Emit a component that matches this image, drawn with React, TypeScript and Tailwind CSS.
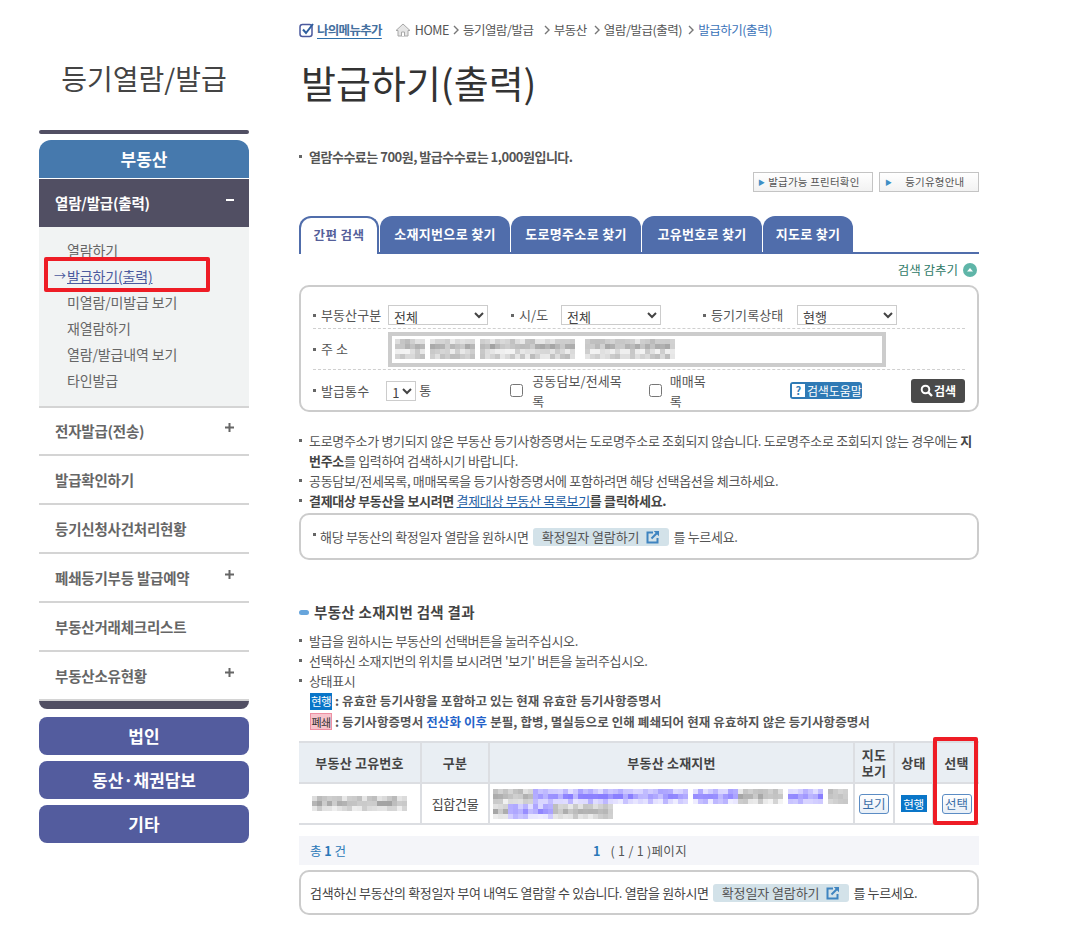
import React from "react";

const FONT = "[font-family:'Noto_Sans_CJK_KR','Noto_Sans',sans-serif]";

function hash(a: number, b: number, s: number) {
  const v = Math.sin(a * 12.9898 + b * 78.233 + s * 37.719) * 43758.5453;
  return v - Math.floor(v);
}

type Range = [number, number, "g" | "p"];

function Mosaic({ w, rows, cell, seed, line }: { w: number; rows: number; cell: number; seed: number; line: (r: number) => Range[] }) {
  const rects: React.ReactNode[] = [];
  for (let r = 0; r < rows; r++) {
    const ranges = line(r);
    for (let c = 0; c < Math.floor(w / cell); c++) {
      const x = c * cell;
      const hit = ranges.find((g) => x >= g[0] && x < g[1]);
      if (!hit) continue;
      const h = hash(c, r, seed);
      const mid = r % 3 === 1 ? 0.34 : r % 3 === 0 ? 0.16 : 0.08;
      const a = Math.min(0.9, mid + h * 0.36);
      const fill = hit[2] === "p" ? `rgba(86,70,255,${a})` : `rgba(90,90,90,${a * 0.8})`;
      rects.push(<rect key={`${r}-${c}`} x={x} y={r * cell} width={cell} height={cell} fill={fill} />);
    }
  }
  return (
    <svg width={w} height={rows * cell} className="block">
      {rects}
    </svg>
  );
}

function Bullet({ children, bold, className = "" }: { children: React.ReactNode; bold?: boolean; className?: string }) {
  return (
    <li className={`flex items-start ${bold ? "font-bold text-[#444]" : ""} ${className}`}>
      <span className="mt-[8px] mr-[7px] w-[3px] h-[3px] bg-[#666] shrink-0" />
      <span>{children}</span>
    </li>
  );
}

function ExternalIcon() {
  return (
    <svg width="14" height="14" viewBox="0 0 14 14" className="shrink-0" fill="none" stroke="#3f84c0" strokeWidth="2">
      <path d="M7 2.5H1.5v10h10V8" />
      <path d="M5.5 8.5 12 2" />
      <path d="M8 1h5v5" fill="#3f84c0" stroke="none" />
      <path d="M8 1h5v5z" fill="#3f84c0" stroke="none" />
    </svg>
  );
}

function ViewButton() {
  return (
    <span className="inline-flex items-center gap-[7px] h-[18px] px-[9px] rounded-[3px] bg-[#d3e2e9] text-[#555] tracking-[-0.1px] mx-[2px]">
      확정일자 열람하기 <ExternalIcon />
    </span>
  );
}

function Chevron() {
  return (
    <svg width="6" height="10" viewBox="0 0 6 10" className="mx-[4px] shrink-0" fill="none" stroke="#777" strokeWidth="1.4">
      <path d="M1 1l4 4-4 4" />
    </svg>
  );
}

function SideItem({ label, plus }: { label: string; plus?: boolean }) {
  return (
    <div className="h-[49px] border-b-2 border-[#d4d4d4] flex items-center justify-between pl-[16px] pr-[15px] text-[14.5px] font-bold text-[#666] tracking-[-0.2px]">
      <span className="pt-[1px]">{label}</span>
      {plus && (
        <svg width="9" height="9" viewBox="0 0 9 9" className="mb-[6px]">
          <path d="M3.5 0h2v3.5H9v2H5.5V9h-2V5.5H0v-2h3.5z" fill="#666" />
        </svg>
      )}
    </div>
  );
}

function OtherMenu({ label }: { label: string }) {
  return <div className="h-[38px] rounded-[8px] bg-[#535c9e] text-white text-[17px] font-bold flex items-center justify-center">{label}</div>;
}

function Tab({ label, w, active }: { label: string; w: string; active?: boolean }) {
  return (
    <div
      className={
        active
          ? `${w} h-[38px] -mb-[2px] relative z-10 bg-white border-2 border-b-0 border-[#506dab] rounded-t-[12px] flex items-center justify-center text-[12.5px] font-bold text-[#555f9a] tracking-[0.4px] pb-[3px]`
          : `${w} h-[36px] bg-[#506dab] rounded-t-[12px] flex items-center justify-center text-[13px] font-bold text-white tracking-[0.3px]`
      }
    >
      {label}
    </div>
  );
}

function Field({ label, className = "" }: { label: string; className?: string }) {
  return (
    <span className={`flex items-center text-[13px] text-[#555] tracking-[0.1px] ${className}`}>
      <span className="w-[3px] h-[3px] bg-[#666] mr-[5px]" />
      {label}
    </span>
  );
}

function Sel({ w, value, options }: { w: string; value: string; options?: string[] }) {
  return (
    <select defaultValue={value} className={`${w} h-[20px] border border-[#ccc] text-[13px] text-[#444] pl-[1px] bg-white`}>
      {(options || [value]).map((o) => (
        <option key={o}>{o}</option>
      ))}
    </select>
  );
}

const Dash = () => <div className="border-t border-dashed border-[#d0d0d0]" />;

export default function App() {
  return (
    <div className={`w-[1072px] h-[946px] bg-white flex overflow-hidden ${FONT} text-[#555] text-[13px] leading-[20px]`}>
      {/* Sidebar */}
      <aside className="w-[210px] ml-[39px] shrink-0 relative">
        <div className="h-[130px] flex items-center justify-center pt-[26px] text-[28px] leading-[40px] text-[#444]">등기열람/발급</div>
        <div className="h-[4px] rounded-[2px] bg-[#514f63]" />
        <div className="mt-[6px] h-[38px] rounded-t-[12px] bg-[#4679ad] text-white text-[17px] font-bold flex items-center justify-center">부동산</div>
        <div className="mt-[1px] h-[48px] bg-[#514f63] text-white text-[14.5px] font-bold flex items-center justify-between pl-[16px] pr-[15px] tracking-[-0.2px]">
          <span>열람/발급(출력)</span>
          <span className="w-[8px] h-[2px] bg-white mb-[6px]" />
        </div>
        <div className="h-[180px] bg-[#f1f3f3] pt-[10px] pl-[28px] text-[14px] leading-[26px] text-[#666] tracking-[-0.15px]">
          <div>열람하기</div>
          <div className="relative text-[#4b5a9e]">
            <span className="absolute -left-[13px] top-0 text-[12px]">→</span>
            <span className="underline">발급하기(출력)</span>
          </div>
          <div>미열람/미발급 보기</div>
          <div>재열람하기</div>
          <div>열람/발급내역 보기</div>
          <div>타인발급</div>
        </div>
        <div className="border-t-2 border-[#d4d4d4] -mt-[1px]" />
        <div className="-mt-[1px]">
          <SideItem label="전자발급(전송)" plus />
          <SideItem label="발급확인하기" />
          <SideItem label="등기신청사건처리현황" />
          <SideItem label="폐쇄등기부등 발급예약" plus />
          <SideItem label="부동산거래체크리스트" />
          <SideItem label="부동산소유현황" plus />
        </div>
        <div className="h-[8px] rounded-b-[8px] bg-[#514f63]" />
        <div className="mt-[8px] flex flex-col gap-[6px]">
          <OtherMenu label="법인" />
          <OtherMenu label="동산·채권담보" />
          <OtherMenu label="기타" />
        </div>
        <div className="absolute left-[5px] top-[257px] w-[166px] h-[35px] border-[4px] border-[#ee1c25] rounded-[2px]" />
      </aside>

      {/* Main */}
      <main className="w-[680px] ml-[50px] shrink-0 relative">
        <div className="h-[20px] mt-[20px] flex items-center text-[12.5px] text-[#555] tracking-[-0.45px]">
          <svg width="16" height="16" viewBox="0 0 16 16" fill="none" className="shrink-0">
            <rect x="1" y="2.5" width="12" height="12" rx="2.5" stroke="#4b5a9e" strokeWidth="1.5" />
            <path d="M4 7.5l3 3.5 7-9" stroke="#2f5f9e" strokeWidth="2" />
          </svg>
          <span className="ml-[2px] font-bold text-[#44709f] underline decoration-[#2d6ea8] underline-offset-[3px] tracking-[-0.7px]">나의메뉴추가</span>
          <svg width="16" height="14" viewBox="0 0 16 14" className="ml-[13px] shrink-0" fill="#e6e6e6" stroke="#a8a8a8">
            <path d="M1 7.5 8 1l7 6.5h-2V13H3V7.5z" />
            <path d="M6.5 13V9h3v4" fill="#fff" />
          </svg>
          <span className="ml-[4px]">HOME</span>
          <Chevron />
          <span>등기열람/발급</span>
          <span className="w-[6px]" />
          <Chevron />
          <span>부동산</span>
          <span className="w-[3px]" />
          <Chevron />
          <span>열람/발급(출력)</span>
          <span className="w-[2px]" />
          <Chevron />
          <span className="text-[#3a72b8]">발급하기(출력)</span>
        </div>
        <h1 className="mt-[17px] ml-[2px] text-[38px] leading-[50px] text-[#333] font-normal">발급하기(출력)</h1>

        <ul className="mt-[40px] text-[#555] font-bold tracking-[-0.5px]">
          <Bullet>열람수수료는 700원, 발급수수료는 1,000원입니다.</Bullet>
        </ul>

        <div className="mt-[5px] flex justify-end gap-[6px]">
          <div className="w-[120px] h-[20px] border border-[#c4c4c4] bg-gradient-to-b from-white to-[#f2f2f2] flex items-center pl-[4px] text-[10.5px] text-[#555] tracking-[0.2px]">
            <span className="text-[#3f8fc5] text-[7px] mr-[3px]">▶</span>발급가능 프린터확인
          </div>
          <div className="w-[100px] h-[20px] border border-[#c4c4c4] bg-gradient-to-b from-white to-[#f2f2f2] flex items-center pl-[5px] text-[10.5px] text-[#555] tracking-[0.2px]">
            <span className="text-[#3f8fc5] text-[7px] mr-[13px]">▶</span>등기유형안내
          </div>
        </div>

        <div className="mt-[24px] flex items-end gap-[1px] border-b-2 border-[#506dab]">
          <Tab label="간편 검색" w="w-[80px]" active />
          <Tab label="소재지번으로 찾기" w="w-[130px]" />
          <Tab label="도로명주소로 찾기" w="w-[130px]" />
          <Tab label="고유번호로 찾기" w="w-[120px]" />
          <Tab label="지도로 찾기" w="w-[90px]" />
        </div>

        <div className="h-[31px] flex items-center justify-end pr-[2px] text-[12.5px] text-[#2f7a68]">
          <span>검색 감추기</span>
          <span className="ml-[5px] w-[14px] h-[14px] rounded-full bg-[#5fb5a8] flex items-center justify-center">
            <svg width="8" height="6" viewBox="0 0 8 6"><path d="M4 1l3 3.5H1z" fill="#fff" /></svg>
          </span>
        </div>

        {/* Search box */}
        <div className="h-[127px] border-2 border-[#ccc] rounded-[10px] px-[12px] relative">
          <div className="h-[41px] flex items-center pt-[15px] box-border">
            <Field label="부동산구분" className="w-[75px]" />
            <Sel w="w-[100px]" value="전체" />
            <Field label="시/도" className="ml-[23px] w-[50px]" />
            <Sel w="w-[100px]" value="전체" />
            <Field label="등기기록상태" className="ml-[42px] w-[94px]" />
            <Sel w="w-[100px]" value="현행" />
          </div>
          <Dash />
          <div className="h-[40px] flex items-center">
            <Field label="주 소" className="w-[75px]" />
            <div className="w-[498px] h-[35px] border-[4px] border-[#ccc] bg-white flex items-center pl-[3px]">
              <Mosaic w={280} rows={4} cell={5} seed={3} line={() => [[0, 30, "g"], [35, 80, "g"], [85, 180, "g"], [190, 280, "g"]]} />
            </div>
          </div>
          <Dash />
          <div className="h-[41px] flex items-center">
            <Field label="발급통수" className="w-[75px]" />
            <Sel w="w-[30px]" value="1" options={["1", "2", "3"]} />
            <span className="ml-[3px] mb-[2px] text-[13px]">통</span>
            <input type="checkbox" readOnly className="ml-[79px] w-[13px] h-[13px]" />
            <span className="ml-[9px] tracking-[0.1px]">공동담보/전세목록</span>
            <input type="checkbox" readOnly className="ml-[17px] w-[13px] h-[13px]" />
            <span className="ml-[8px] tracking-[0.1px]">매매목록</span>
            <span className="ml-[73px] w-[74px] h-[17px] rounded-[3px] bg-[#2f7ab5] flex items-center text-white text-[12px] tracking-[-0.1px]">
              <span className="ml-[2px] mr-[2px] w-[13px] h-[13px] bg-white text-[#2f7ab5] text-[11px] font-bold leading-[13px] text-center">?</span>
              검색도움말
            </span>
            <span className="ml-[49px] w-[55px] h-[24px] rounded-[3px] bg-[#4a4a4a] flex items-center justify-center gap-[1px] text-white text-[12px] font-bold">
              <svg width="13" height="13" viewBox="0 0 13 13" fill="none" stroke="#fff"><circle cx="5.5" cy="5.5" r="3.8" strokeWidth="2" /><path d="M8.5 8.5l3.5 3.5" strokeWidth="2.4" /></svg>
              검색
            </span>
          </div>
        </div>

        <ul className="mt-[19px] tracking-[-0.32px]">
          <Bullet>
            도로명주소가 병기되지 않은 부동산 등기사항증명서는 도로명주소로 조회되지 않습니다. 도로명주소로 조회되지 않는 경우에는 <b className="text-[#444]">지번주소</b>를 입력하여 검색하시기 바랍니다.
          </Bullet>
          <Bullet>공동담보/전세목록, 매매목록을 등기사항증명서에 포함하려면 해당 선택옵션을 체크하세요.</Bullet>
          <Bullet bold>
            결제대상 부동산을 보시려면 <span className="text-[#1f5fa5] underline font-normal">결제대상 부동산 목록보기</span>를 클릭하세요.
          </Bullet>
        </ul>

        <div className="mt-[2px] h-[47px] border-2 border-[#ccc] rounded-[10px] flex items-center pl-[12px] tracking-[-0.3px]">
          <span className="w-[3px] h-[3px] bg-[#666] mr-[4px] mb-[4px]" />
          해당 부동산의 확정일자 열람을 원하시면 <span className="mx-[2px]"><ViewButton /></span> 를 누르세요.
        </div>

        <h2 className="mt-[41px] flex items-center text-[14.5px] font-bold text-[#444] tracking-[0.3px] leading-[22px]">
          <span className="w-[10px] h-[5px] rounded-full bg-[#67a5dc] mr-[5px]" />
          부동산 소재지번 검색 결과
        </h2>

        <ul className="mt-[8px] tracking-[-0.35px]">
          <Bullet>발급을 원하시는 부동산의 선택버튼을 눌러주십시오.</Bullet>
          <Bullet>선택하신 소재지번의 위치를 보시려면 '보기' 버튼을 눌러주십시오.</Bullet>
          <Bullet>상태표시</Bullet>
        </ul>
        <div className="ml-[11px] h-[20px] flex items-center font-bold text-[12.5px] text-[#555] tracking-[0.1px]">
          <span className="w-[22px] h-[17px] bg-[#0a76c8] text-white text-[11.5px] font-normal flex items-center justify-center tracking-[-0.5px]">현행</span>
          <span className="ml-[3px]">: 유효한 등기사항을 포함하고 있는 현재 유효한 등기사항증명서</span>
        </div>
        <div className="ml-[11px] h-[21px] flex items-center font-bold text-[12.5px] text-[#555] tracking-[0.1px]">
          <span className="w-[22px] h-[17px] bg-[#f7c3cc] border border-[#ee8fa3] text-[#333] text-[11px] font-normal flex items-center justify-center tracking-[-0.5px]">폐쇄</span>
          <span className="ml-[3px]">: 등기사항증명서 <span className="text-[#2563c9]">전산화 이후</span> 분필, 합병, 멸실등으로 인해 폐쇄되어 현재 유효하지 않은 등기사항증명서</span>
        </div>

        {/* Table */}
        <table className="mt-[9px] w-[680px] table-fixed border-collapse text-[13px]">
          <colgroup>
            <col className="w-[122px]" />
            <col className="w-[68px]" />
            <col className="w-[365px]" />
            <col className="w-[40px]" />
            <col className="w-[39px]" />
            <col className="w-[46px]" />
          </colgroup>
          <thead>
            <tr className="h-[41px] bg-[#e9eef3] text-[#444] text-[13px] font-bold tracking-[0.2px] leading-[16px]">
              <th className="border-r-2 border-y-2 border-[#dcdee2] ">부동산 고유번호</th>
              <th className="border-r-2 border-y-2 border-[#dcdee2]">구분</th>
              <th className="border-r-2 border-y-2 border-[#dcdee2]">부동산 소재지번</th>
              <th className="border-r-2 border-y-2 border-[#dcdee2]">지도<br />보기</th>
              <th className="border-r-2 border-y-2 border-[#dcdee2]">상태</th>
              <th className="border-y-2 border-[#dcdee2]">선택</th>
            </tr>
          </thead>
          <tbody>
            <tr className="h-[41px]">
              <td className="border-r-2 border-b-2 border-[#dcdee2]">
                <div className="flex justify-center">
                  <Mosaic w={96} rows={3} cell={5} seed={7} line={() => [[0, 30, "g"], [30, 60, "g"], [60, 96, "g"]]} />
                </div>
              </td>
              <td className="border-r-2 border-b-2 border-[#dcdee2] text-center text-[#444] tracking-[-0.3px]">집합건물</td>
              <td className="border-r-2 border-b-2 border-[#dcdee2] px-[3px]">
                <Mosaic
                  w={355}
                  rows={6}
                  cell={5}
                  seed={11}
                  line={(r) =>
                    r < 3
                      ? [[0, 40, "g"], [40, 195, "p"], [200, 245, "p"], [245, 290, "g"], [295, 330, "p"], [335, 355, "g"]]
                      : [[0, 15, "g"], [15, 60, "p"], [60, 120, "g"]]
                  }
                />
              </td>
              <td className="border-r-2 border-b-2 border-[#dcdee2] text-center">
                <span className="inline-flex w-[30px] h-[20px] rounded-[3px] border border-[#5b8cc4] bg-gradient-to-b from-white to-[#e8eff7] text-[#3b6ea8] text-[12.5px] items-center justify-center">보기</span>
              </td>
              <td className="border-r-2 border-b-2 border-[#dcdee2] text-center">
                <span className="inline-flex w-[26px] h-[17px] bg-[#0a76c8] text-white text-[11.5px] items-center justify-center tracking-[-0.3px]">현행</span>
              </td>
              <td className="border-b-2 border-[#dcdee2] text-center">
                <span className="inline-flex w-[30px] h-[20px] rounded-[3px] border border-[#5b8cc4] bg-gradient-to-b from-white to-[#e8eff7] text-[#3b6ea8] text-[12.5px] items-center justify-center">선택</span>
              </td>
            </tr>
          </tbody>
        </table>

        <div className="mt-[11px] h-[29px] bg-[#f4f5f9] relative flex items-center justify-center text-[12.5px]">
          <span className="absolute left-[11px] text-[#2a78b8]">총 <b>1</b> 건</span>
          <span className="ml-[2px]"><b className="text-[#2a78b8]">1</b><span className="ml-[10px] tracking-[0.3px]">( 1 / 1 )페이지</span></span>
        </div>

        <div className="mt-[5px] h-[45px] border-2 border-[#ccc] rounded-[10px] flex items-center pl-[9px] text-[#444] tracking-[-0.33px]">
          검색하신 부동산의 확정일자 부여 내역도 열람할 수 있습니다. 열람을 원하시면 <span className="mx-[2px]"><ViewButton /></span> 를 누르세요.
        </div>

        <div className="absolute left-[634px] top-[737px] w-[45px] h-[88px] border-[4px] border-[#ee1c25] rounded-[2px]" />
      </main>
    </div>
  );
}
